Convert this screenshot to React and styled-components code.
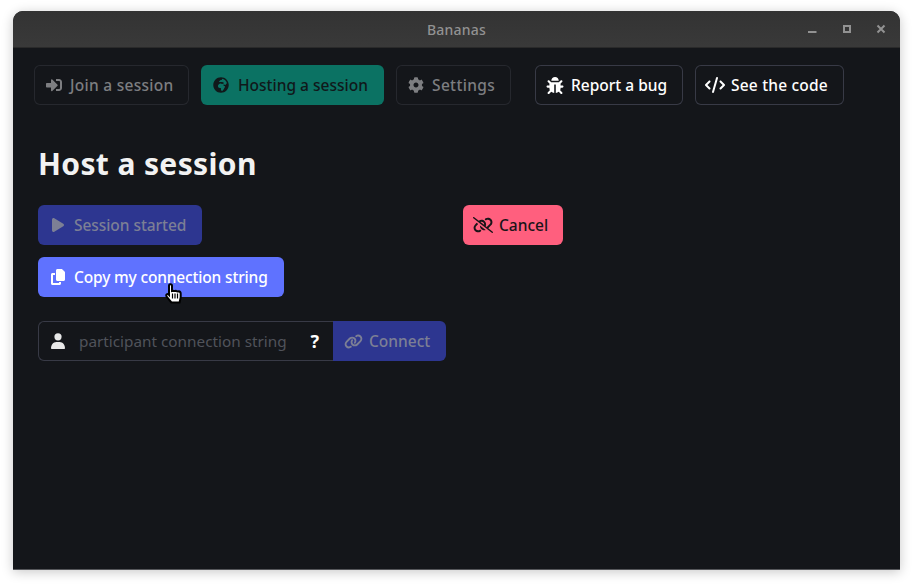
import styled, { createGlobalStyle } from "styled-components";
import { FaSignInAlt, FaGlobeAfrica, FaCog, FaBug } from "react-icons/fa";
import { FaCode, FaCopy, FaLink, FaLinkSlash, FaPlay } from "react-icons/fa6";

const Global = createGlobalStyle`
  html, body {
    margin: 0;
    background: #fff;
  }
  * {
    box-sizing: border-box;
  }
`;

const Desktop = styled.div`
  width: 913px;
  height: 586px;
  padding: 11px 13px 16px;
  font-family: "Noto Sans", sans-serif;
  overflow: hidden;
`;

const Window = styled.div`
  height: 559px;
  display: flex;
  flex-direction: column;
  position: relative;
  background: #14161a;
  border-radius: 10px 10px 0 0;
  border-bottom: 1px solid #55565a;
  box-shadow: 0 2px 12px rgba(0, 0, 0, 0.22);
  overflow: hidden;
`;

const TitleBar = styled.div`
  height: 37px;
  flex: none;
  display: grid;
  grid-template-columns: 1fr auto 1fr;
  align-items: center;
  background: linear-gradient(#333333, #393939);
  border-bottom: 1px solid #2a2a2a;
  color: #929292;
`;

const Title = styled.div`
  grid-column: 2;
  font-size: 14px;
  font-weight: 500;
  letter-spacing: 0.2px;
`;

const Controls = styled.div`
  grid-column: 3;
  justify-self: end;
  display: flex;
  align-items: center;
  gap: 24.5px;
  padding-right: 14px;
`;

const Toolbar = styled.nav`
  display: flex;
  padding: 17px 21px 0;
  gap: 12px;
`;

const Button = styled.button`
  display: flex;
  align-items: center;
  gap: ${(p) => p.$gap || 6}px;
  height: 40px;
  width: ${(p) => p.$w}px;
  margin-left: ${(p) => p.$offset || 0}px;
  padding: 0 0 0 10px;
  border-radius: 6px;
  border: 0 solid transparent;
  box-shadow: inset 0 0 0 1px ${(p) => p.$border || "transparent"};
  background: ${(p) => p.$bg || "transparent"};
  color: ${(p) => p.$color || "#fff"};
  font-family: inherit;
  font-size: 15.5px;
  font-weight: 500;
  letter-spacing: ${(p) => p.$track || 0}px;
  white-space: nowrap;
`;

// fixed-width slot the icon sits in, so labels line up whatever the glyph ratio
const Slot = styled.span`
  width: 20px;
  flex: none;
  display: flex;
  justify-content: center;

  svg {
    width: ${(p) => p.$iw || 16}px;
    height: ${(p) => p.$ih || 16}px;
  }
`;

const Main = styled.main`
  padding: 0 25px;
`;

const Heading = styled.h1`
  margin: 40px 0 22px;
  font-size: 30px;
  line-height: 38px;
  font-weight: 700;
  letter-spacing: 0.37px;
  color: #f2f2f2;
`;

const ActionRow = styled.div`
  display: grid;
  grid-template-columns: 425px auto;
  justify-content: start;
  margin-bottom: 12px;
`;

const ConnectRow = styled.div`
  display: flex;
  margin-top: 24px;
`;

const InputBox = styled.div`
  width: 295px;
  height: 40px;
  display: flex;
  align-items: center;
  padding: 0 14px 0 9px;
  border: 1px solid #383a46;
  border-right: none;
  border-radius: 6px 0 0 6px;
  color: #e8e8e8;
`;

const Placeholder = styled.span`
  margin-left: 11px;
  flex: 1;
  font-size: 15.3px;
  color: #50535a;
  white-space: nowrap;
`;

const Help = styled.span`
  font-size: 18px;
  font-weight: 700;
  color: #fff;
`;

const ConnectButton = styled(Button)`
  border-radius: 0 6px 6px 0;
`;

const Pointer = styled.svg`
  position: absolute;
  left: 152px;
  top: 272px;
`;

const App = () => {
  return (
    <Desktop>
      <Global />
      <Window>
        <TitleBar>
          <Title>Bananas</Title>
          <Controls>
            <svg width="10" height="10" viewBox="0 0 10 10">
              <rect x="1" y="7" width="8.5" height="2" fill="#929292" />
            </svg>
            <svg width="10" height="10" viewBox="0 0 10 10">
              <rect x="2" y="2" width="6" height="6" fill="none" stroke="#929292" strokeWidth="2" />
            </svg>
            <svg width="10" height="10" viewBox="0 0 10 10">
              <path d="M1.5 1.5 8.5 8.5M8.5 1.5 1.5 8.5" stroke="#929292" strokeWidth="2" />
            </svg>
          </Controls>
        </TitleBar>
        <Toolbar>
          <Button $w={155} $border="#26282e" $color="#7d7e81" $track={0.28}>
            <Slot><FaSignInAlt /></Slot>
            Join a session
          </Button>
          <Button $w={183} $bg="#0b7263" $color="#10181a" $gap={7}>
            <Slot><FaGlobeAfrica /></Slot>
            Hosting a session
          </Button>
          <Button $w={115} $border="#26282e" $color="#7d7e81" $track={0.35}>
            <Slot><FaCog /></Slot>
            Settings
          </Button>
          <Button $w={148} $border="#383a46" $offset={12}>
            <Slot $iw={18} $ih={17}><FaBug /></Slot>
            Report a bug
          </Button>
          <Button $w={149} $border="#383a46" $track={0.2}>
            <Slot $iw={20}><FaCode /></Slot>
            See the code
          </Button>
        </Toolbar>
        <Main>
          <Heading>Host a session</Heading>
          <ActionRow>
            <Button $w={164} $bg="#2d3690" $color="#7c7f95" $track={-0.06}>
              <Slot $iw={12}><FaPlay /></Slot>
              Session started
            </Button>
            <Button $w={100} $bg="#ff5f7e" $color="#1a1418">
              <Slot $iw={21}><FaLinkSlash /></Slot>
              Cancel
            </Button>
          </ActionRow>
          <Button $w={246} $bg="#5f72ff" $track={-0.16}>
            <Slot $iw={14}><FaCopy /></Slot>
            Copy my connection string
          </Button>
          <ConnectRow>
            <InputBox>
              <Slot>
                <svg viewBox="0 0 14 16" fill="currentColor">
                  <circle cx="7" cy="3.8" r="3.6" />
                  <path d="M0 15.2C0 11.9 2.4 9 5.2 9h3.6c2.8 0 5.2 2.9 5.2 6.2 0 .5-.3.8-.8.8H.8c-.5 0-.8-.3-.8-.8Z" />
                </svg>
              </Slot>
              <Placeholder>participant connection string</Placeholder>
              <Help>?</Help>
            </InputBox>
            <ConnectButton $w={113} $bg="#2d3690" $color="#7c7f95">
              <Slot $iw={19} $ih={15}><FaLink /></Slot>
              Connect
            </ConnectButton>
          </ConnectRow>
        </Main>
        <Pointer width="19" height="21" viewBox="0 0 19 21">
          <path
            d="M5.5 1.2C6.5 1.2 7 1.9 7 2.8V8l1.2-.3 1.3.4 1.4-.2 1.3.5 1.4-.1c1.3.2 2.1 1 2.1 2.2v3.7L14.6 19.5H6.4L1.8 13.8c-.8-1-.7-2 0-2.5.7-.5 1.5-.3 2.2.5v-9c0-.9.5-1.6 1.5-1.6Z"
            fill="#fff"
            stroke="#000"
            strokeWidth="2"
          />
          <path d="M7.5 10.5v5M10 10.5v5M12.5 10.5v5" stroke="#000" strokeWidth="1.2" />
        </Pointer>
      </Window>
    </Desktop>
  );
};

export default App;
